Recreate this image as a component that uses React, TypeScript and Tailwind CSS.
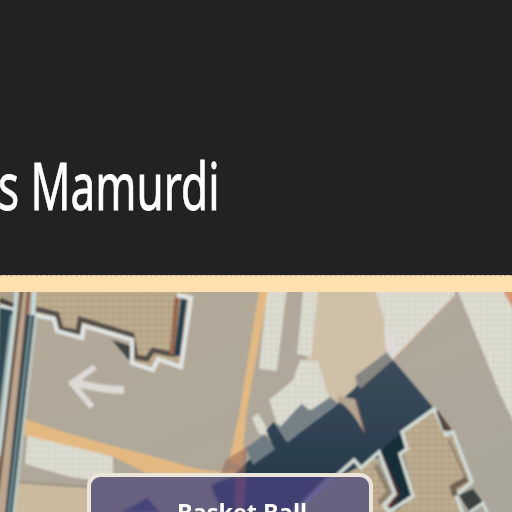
import React from "react";

const roof = "url(#roof)";
const tile = "url(#tile)";

function SiteMap() {
  return (
    <svg className="block h-[220px] w-full" viewBox="0 292 512 220" preserveAspectRatio="none">
      <defs>
        <pattern id="roof" width="7" height="6" patternUnits="userSpaceOnUse">
          <rect width="7" height="6" fill="#bdab8d" />
          <path d="M1 0V6M4.5 0V3" stroke="#998871" strokeWidth="1.4" opacity=".65" />
          <path d="M0 4H7" stroke="#d0c0a4" strokeWidth="1" opacity=".7" />
        </pattern>
        <pattern id="tile" width="6" height="6" patternUnits="userSpaceOnUse">
          <rect width="6" height="6" fill="#e0ded3" />
          <path d="M1 0V6M0 2H6" stroke="#c8cbbe" strokeWidth="1" opacity=".8" />
        </pattern>
        <linearGradient id="road" x1="0" y1="0" x2="1" y2="1">
          <stop offset="0" stopColor="#b4a999" />
          <stop offset="1" stopColor="#aaa69b" />
        </linearGradient>
        <linearGradient id="shade" x1="0" y1="0" x2="0" y2="1">
          <stop offset="0" stopColor="#3d4c5b" />
          <stop offset="1" stopColor="#263b4b" />
        </linearGradient>
        <filter id="soft" x="-2%" y="-2%" width="104%" height="104%">
          <feGaussianBlur stdDeviation="1" />
        </filter>
      </defs>
      <rect y="292" width="512" height="220" fill="url(#road)" />
      <g filter="url(#soft)">
        <path d="M12 482L90 487V520H5Z" fill="#cabb9e" />
        <path d="M318 280H374L386 316L388 350L356 377L353 400L330 405L306 360Z" fill="#cfc1a8" />
        <path d="M372 280H454L455 296L393 360L386 350L384 318Z" fill={tile} />
        <path d="M384 325L400 350L393 360L386 350Z" fill="#dedbd8" />
        <path d="M460 280H520V435L500 394L482 350L458 292Z" fill={tile} />
        <path d="M455 296L394 359" stroke="#c8a08b" strokeWidth="1.5" />
        <path d="M500 286H520V320Z" fill="#d69770" />
        <path d="M268 280H288L277 371L259 369Z" fill={tile} />
        <path d="M304 280H319L311 357L297 354Z" fill={tile} />
        <path d="M300 360L318 361L327 392L330 403L310 410L279 430L269 400L293 380Z" fill={tile} />
        <path d="M252 418L258 413L267 428V436L259 434Z" fill={tile} />
        <path d="M28 430L113 457V483L70 477L25 464Z" fill={tile} />
        <path d="M15 482L88 487" stroke="#97907f" strokeWidth="2" />
        <path d="M25 419C85 440 130 450 170 461C192 468 212 474 235 470V480H160L112 456L24 435Z" fill="#e4b981" />
        <path d="M261 280H270L246 415L242 466L229 461L239 415Z" fill="#e4b981" />
        <path d="M230 480L251 458L268 445L274 449L266 430L274 422L287 442L335 406L358 385L392 359L435 410L400 440L388 458L375 458L345 474L320 485Z" fill="url(#shade)" />
        <path d="M246 448L265 434L275 449L253 465Z" fill="#6d7c83" />
        <path d="M276 426L302 404L309 410L328 396L338 403L288 442Z" fill="#748187" />
        <path d="M274 409L302 385L328 393L329 398L311 410L302 403L280 427Z" fill={tile} />
        <path d="M355 376L386 353L393 360L360 389Z" fill="#858581" />
        <path d="M338 396L355 399L365 433C359 425 352 409 338 401Z" fill="#b4a493" />
        <path d="M356 400L365 433" stroke="#765853" strokeWidth="1.5" />
        <path d="M226 460L248 446L244 480H218Z" fill="#9b6b58" opacity=".6" />

        <path d="M35 280H190L184 360L181 367L158 365L154 372L134 364L132 339L83 326L82 338L56 331L54 319L35 315Z" fill={roof} />
        <path d="M36 309L57 314L61 329L78 332L80 319L132 335L136 357L147 359L153 350L175 355" fill="none" stroke="#54504a" strokeWidth="5" />
        <path d="M177 297L172 355" stroke="#95654b" strokeWidth="5" />
        <path d="M184 298L177 356" stroke="#234150" strokeWidth="6" />
        <path d="M35 315L54 319L57 331L82 338L84 326L132 340L132 363L153 370L158 359L181 367L191 298L177 295" fill="none" stroke="#e0e4e1" strokeWidth="4.4" />
        <path d="M112 340L130 346V361Z" fill="#434642" />

        <path d="M0 280H15L15 307L0 303Z" fill="#a99f88" />
        <path d="M0 306L13 309L-3 430Z" fill="#2e4651" />
        <path d="M0 300L14 306" stroke="#483e39" strokeWidth="5" />
        <path d="M0 306L14 309" stroke="#d3e0df" strokeWidth="3" />
        <path d="M27 280L0 512" stroke="#bca58e" strokeWidth="14" />
        <path d="M23 280L-2 490" stroke="#655246" strokeWidth="3" />
        <path d="M30 280L6 520" stroke="#80594a" strokeWidth="3" />
        <path d="M31 315L9 520" stroke="#314954" strokeWidth="9" />
        <path d="M31 315L8 520" stroke="#8aacad" strokeWidth="1.5" />
        <path d="M36 316L13 520" stroke="#bdc9c1" strokeWidth="3" />
        <path d="M35 280L33 315" stroke="#c5dfe0" strokeWidth="4" />
        <path d="M17 280L15 310L-1 455" fill="none" stroke="#c4dbdc" strokeWidth="3.5" />
        <path d="M11 315L-1 418" stroke="#89a7aa" strokeWidth="1.5" />

        <path d="M95 367L72 383L92 407" fill="none" stroke="#ddd9d5" strokeWidth="6" />
        <path d="M73 382C91 387 106 390 124 390" fill="none" stroke="#ddd9d5" strokeWidth="8" />

        <path d="M345 475L376 459L395 499L386 512H340Z" fill={roof} />
        <path d="M403 431L433 411L445 435L455 438L473 482L456 492L465 520H390L388 508L412 496L402 454L407 448Z" fill={roof} />
        <path d="M379 456L397 496L388 507L397 510L414 496L403 455L407 448L403 433L385 446Z" fill="#172d37" />
        <path d="M380 453L398 494L390 507" fill="none" stroke="#583034" strokeWidth="4" />
        <path d="M376 465L389 492L379 503" fill="none" stroke="#776b5b" strokeWidth="5" opacity=".65" />
        <path d="M333 479L354 460L361 468L379 452L395 494L384 505L389 512L413 496L400 454L407 449L402 432L434 409L446 435L453 432L472 482L456 495L465 520" fill="none" stroke="#d1dcd7" strokeWidth="3.5" />
        <path d="M437 411L450 429L444 430Z" fill="#59483f" stroke="#59483f" strokeWidth="2" />
        <path d="M449 440L466 478" fill="none" stroke="#877965" strokeWidth="3" opacity=".7" />
        <path d="M467 479L453 487L455 496" fill="none" stroke="#5c5144" strokeWidth="6" opacity=".8" />
        <path d="M459 495L473 489L484 504L470 512Z" fill="#3b423d" />
        <path d="M470 512L483 503L490 520" fill="none" stroke="#d1dcd7" strokeWidth="3" />
      </g>
    </svg>
  );
}

function MapLabel() {
  return (
    <div className="absolute top-[181px] left-[87px] h-[90px] w-[286px] overflow-hidden rounded-[13px] border-[4px] border-[#ece5da] bg-[#686180]">
      <svg className="absolute inset-0 h-full w-full" viewBox="91 477 278 82">
        <defs>
          <filter id="glass">
            <feGaussianBlur stdDeviation="1.5" />
          </filter>
        </defs>
        <g filter="url(#glass)">
          <path d="M121 512L139 503L147 498L160 512Z" fill="#444477" />
          <path d="M211 485L245 472H332L284 520H225Z" fill="#413f72" />
          <path d="M235 472H247L243 520H234Z" fill="#5e4773" />
          <path d="M334 475L287 520" stroke="#67659a" strokeWidth="4" />
        </g>
      </svg>
      <div className="relative mt-[21px] ml-[86px] font-['Open_Sans',sans-serif] text-[24px] leading-[28px] font-bold whitespace-nowrap text-white">
        <span className="inline-block origin-left scale-x-[.975]">Basket Ball</span>
      </div>
    </div>
  );
}

export default function App() {
  return (
    <main className="flex h-[512px] w-[512px] flex-col overflow-hidden bg-[#222222]">
      <header className="h-[275px] shrink-0 pt-[138px]">
        <h1 className="-ml-[2px] origin-left scale-x-[.668] font-['Noto_Sans',sans-serif] text-[66px] leading-[92px] whitespace-nowrap text-white [-webkit-text-stroke:0.8px_white]">
          s Mamurdi
        </h1>
      </header>
      <div className="h-[17px] shrink-0 border-t border-dashed border-[#c6ac87] bg-[#ffe0ae]" />
      <section className="relative h-[220px] shrink-0 overflow-hidden">
        <SiteMap />
        <MapLabel />
      </section>
    </main>
  );
}
